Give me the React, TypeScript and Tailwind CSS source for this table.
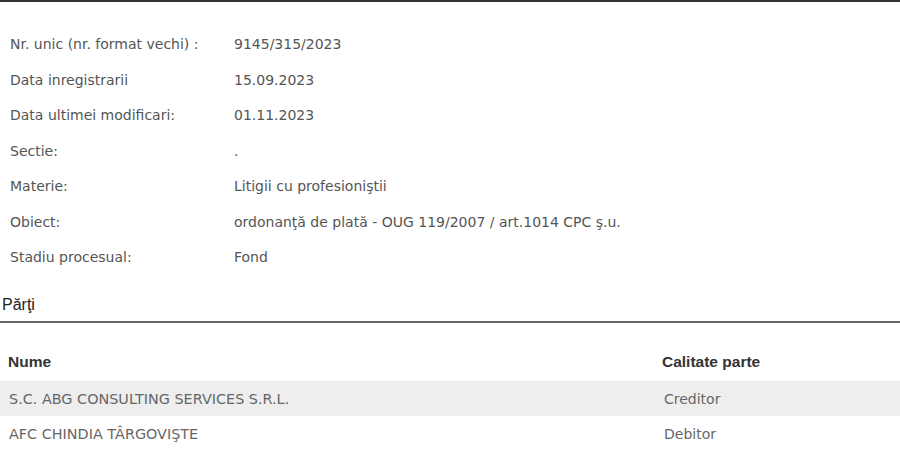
const details: [string, string][] = [
    ['Nr. unic (nr. format vechi) :', '9145/315/2023'],
    ['Data inregistrarii', '15.09.2023'],
    ['Data ultimei modificari:', '01.11.2023'],
    ['Sectie:', '.'],
    ['Materie:', 'Litigii cu profesioniştii'],
    ['Obiect:', 'ordonanţă de plată - OUG 119/2007 / art.1014 CPC ş.u.'],
    ['Stadiu procesual:', 'Fond'],
];

const parti = [
    { nume: 'S.C. ABG CONSULTING SERVICES S.R.L.', calitate: 'Creditor' },
    { nume: 'AFC CHINDIA TÂRGOVIŞTE', calitate: 'Debitor' },
];

export default function App() {
    return (
        <div className="h-[470px] w-[900px] overflow-hidden bg-white">
            <div className="h-[2px] bg-[#333]" />

            <div className="pt-[25px] font-['DejaVu_Sans',sans-serif] text-[14px] text-[#555]">
                {details.map(([label, value]) => (
                    <div key={label} className="flex h-[35.5px] items-center">
                        <div className="w-[234px] pl-[10px]">{label}</div>
                        <div>{value}</div>
                    </div>
                ))}
            </div>

            <div className="mt-[17px] border-b-2 border-[#666] pb-[4px] pl-[2px] font-['Liberation_Sans',sans-serif] text-[16px] text-[#222]">
                Părţi
            </div>

            <table className="mt-[20px] w-full border-collapse">
                <thead>
                    <tr className="font-['Liberation_Sans',sans-serif] text-[15.5px] font-bold text-[#333]">
                        <th className="h-[38px] pl-[8px] text-left align-middle">Nume</th>
                        <th className="w-[238px] text-left align-middle">Calitate parte</th>
                    </tr>
                </thead>
                <tbody className="font-['DejaVu_Sans',sans-serif] text-[#666]">
                    {parti.map((p, i) => (
                        <tr key={p.nume} className={i % 2 === 0 ? 'bg-[#eee]' : ''}>
                            <td className="h-[35px] pl-[9px] pt-[3px] text-[14.4px]">{p.nume}</td>
                            <td className="pl-[2px] pt-[3px] text-[14px]">{p.calitate}</td>
                        </tr>
                    ))}
                </tbody>
            </table>
        </div>
    );
}
